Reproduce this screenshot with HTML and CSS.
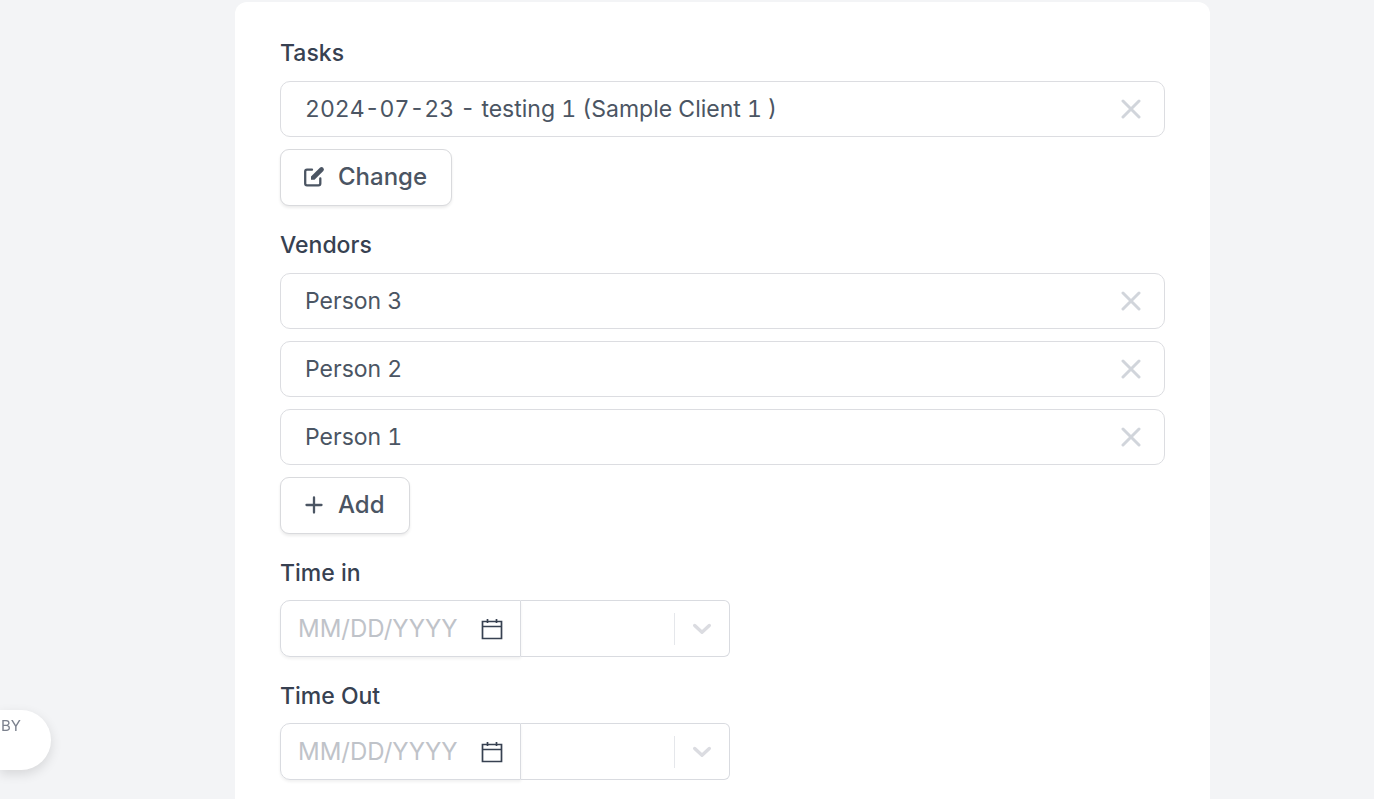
FILE: index.html
```
<!DOCTYPE html>
<html lang="en">
<head>
<meta charset="utf-8">
<meta name="viewport" content="width=device-width, initial-scale=1">
<title>Time entry</title>
<link rel="stylesheet" href="styles.css">
</head>
<body>
<svg class="sprite" aria-hidden="true">
  <symbol id="close" viewBox="0 0 20 20"><path d="M2 2l16 16M18 2L2 18" fill="none" stroke="currentColor" stroke-width="3" stroke-linecap="round"/></symbol>
  <symbol id="calendar" viewBox="0 0 22 22"><path d="M1.500 3.500h19v17h-19zM1.500 8.500h19M6.500 1v4M15.500 1v4" fill="none" stroke="currentColor" stroke-width="1.700"/></symbol>
  <symbol id="chevron" viewBox="0 0 20 12"><path d="M2.700 2.500L10 9.200l7.300-6.700" fill="none" stroke="currentColor" stroke-width="3.400" stroke-linecap="round" stroke-linejoin="round"/></symbol>
</svg>
<main class="page">
  <form class="card">
    <section class="group">
      <h2 class="label">Tasks</h2>
      <div class="item"><span>2024-07-23 - testing 1 (Sample Client 1 )</span><button class="remove" type="button" aria-label="Remove task"><svg class="icon-close"><use href="#close"/></svg></button></div>
      <button class="action" type="button"><svg class="icon-action" viewBox="0 0 22 22"><path d="M9 3.700H4Q2.200 3.700 2.200 5.500V17.500Q2.200 19.300 4 19.300H15.500Q17.300 19.300 17.300 17.500V12.500" fill="none" stroke="currentColor" stroke-width="2.300" stroke-linecap="round"/><path d="M8 10.500L16.900 1.700Q18.600.300 20.200 1.800Q21.700 3.500 20.300 5.100L11.500 13.800H8z" fill="currentColor"/></svg>Change</button>
    </section>
    <section class="group">
      <h2 class="label">Vendors</h2>
      <div class="item"><span>Person 3</span><button class="remove" type="button" aria-label="Remove Person 3"><svg class="icon-close"><use href="#close"/></svg></button></div>
      <div class="item"><span>Person 2</span><button class="remove" type="button" aria-label="Remove Person 2"><svg class="icon-close"><use href="#close"/></svg></button></div>
      <div class="item"><span>Person 1</span><button class="remove" type="button" aria-label="Remove Person 1"><svg class="icon-close"><use href="#close"/></svg></button></div>
      <button class="action" type="button"><svg class="icon-action" viewBox="0 0 22 22"><path d="M11 3.500v15M3.500 11h15" fill="none" stroke="currentColor" stroke-width="2.300" stroke-linecap="round"/></svg>Add</button>
    </section>
    <section class="group group-time">
      <label class="label" for="in-date">Time in</label>
      <div class="datetime">
        <div class="date"><input class="date-input" id="in-date" type="text" placeholder="MM/DD/YYYY"><button class="pick" type="button" aria-label="Open calendar"><svg class="icon-calendar"><use href="#calendar"/></svg></button></div>
        <div class="time"><select class="time-select" aria-label="Time in hour"><option></option></select><span class="arrow"><svg class="icon-chevron"><use href="#chevron"/></svg></span></div>
      </div>
    </section>
    <section class="group group-time">
      <label class="label" for="out-date">Time Out</label>
      <div class="datetime">
        <div class="date"><input class="date-input" id="out-date" type="text" placeholder="MM/DD/YYYY"><button class="pick" type="button" aria-label="Open calendar"><svg class="icon-calendar"><use href="#calendar"/></svg></button></div>
        <div class="time"><select class="time-select" aria-label="Time out hour"><option></option></select><span class="arrow"><svg class="icon-chevron"><use href="#chevron"/></svg></span></div>
      </div>
    </section>
  </form>
</main>
<aside class="badge">BY</aside>
</body>
</html>
```
FILE: styles.css
```
* { box-sizing: border-box; }
body {
  margin: 0;
  background: #f3f4f6;
  color: #4b5563;
  font: 24px/32px Inter, sans-serif;
}
button, input, select { font: inherit; color: inherit; }
.sprite { position: absolute; width: 0; height: 0; }
.page { padding: 2px 164px 0 235px; }
.card {
  display: flex;
  flex-direction: column;
  gap: 23px;
  min-height: 100vh;
  padding: 35px 45px;
  background: #fff;
  border-radius: 12px;
}
.group { display: flex; flex-direction: column; align-items: flex-start; gap: 12px; }
.group-time { gap: 11px; }
.label { margin: 0; color: #374151; font-size: 23px; font-weight: 500; }
.item {
  display: flex;
  align-items: center;
  justify-content: space-between;
  width: 100%;
  padding: 11px 23px 11px 24px;
  border: 1px solid #dcdde1;
  border-radius: 10px;
  font-size: 23px;
  font-variant-numeric: tabular-nums;
}
.remove, .pick { display: flex; padding: 0; border: 0; background: none; }
.remove { color: #d1d5db; }
.icon-close { width: 20px; height: 20px; }
.action {
  display: flex;
  align-items: center;
  gap: 13px;
  padding: 11px 24px 12px 22px;
  border: 1px solid #d9dadd;
  border-radius: 9px;
  background: #fff;
  box-shadow: 0 2px 3px rgba(0, 0, 0, .08);
  font-weight: 500;
}
.icon-action { width: 22px; height: 22px; }
.datetime { display: flex; }
.date {
  display: flex;
  align-items: center;
  width: 241px;
  padding: 12px 17px 11px;
  border: 1px solid #d9dbe0;
  border-radius: 10px 0 0 10px;
  box-shadow: 0 2px 3px rgba(0, 0, 0, .06);
}
.date-input {
  flex: 1;
  min-width: 0;
  height: 32px;
  padding: 0;
  border: 0;
  outline: 0;
  background: none;
}
.date-input::placeholder { color: #bfc3c9; opacity: 1; }
.pick { color: #374151; }
.icon-calendar { width: 22px; height: 22px; }
.time {
  display: grid;
  width: 209px;
  border: 1px solid #d9dbe0;
  border-left: 0;
  border-radius: 0 6px 6px 0;
}
.time-select, .arrow { grid-area: 1 / 1; }
.time-select { width: 100%; border: 0; background: none; appearance: none; }
.arrow {
  display: flex;
  align-items: center;
  align-self: center;
  justify-self: end;
  height: 32px;
  padding: 0 17px;
  border-left: 1px solid #e5e7eb;
  color: #dbdce1;
  pointer-events: none;
}
.icon-chevron { width: 20px; height: 12px; }
.badge {
  position: fixed;
  left: 0;
  bottom: 29px;
  width: 51px;
  height: 60px;
  padding: 6px 0 0 1px;
  border-radius: 0 30px 30px 0;
  background: #fff;
  box-shadow: 0 4px 12px rgba(0, 0, 0, .12);
  color: #7b818d;
  font-size: 15px;
  line-height: 20px;
}
```
